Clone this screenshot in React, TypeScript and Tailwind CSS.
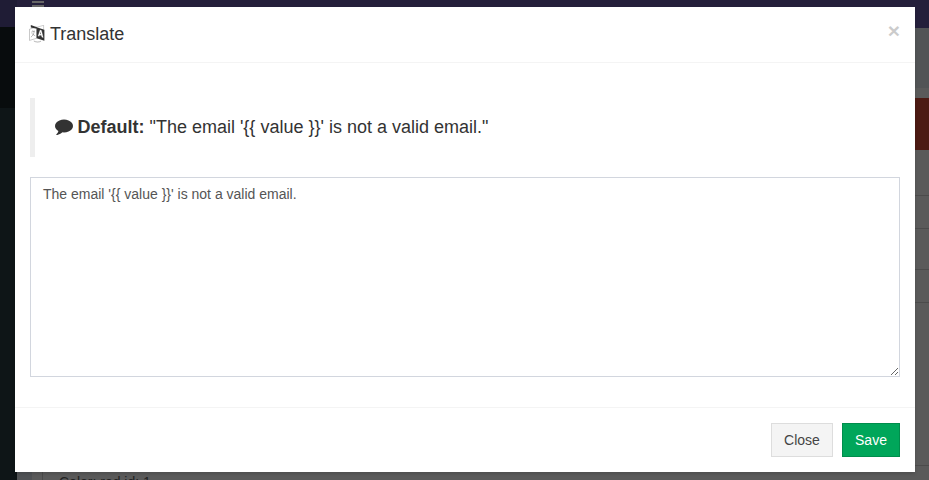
import React from "react";

function LanguageIcon() {
  return (
    <svg width="16" height="18" viewBox="0 0 16 18" className="-mt-[2px] shrink-0" aria-hidden="true">
      <path d="M.5 4.200 7.600 1.900v11.400L.5 15.400z" fill="#fff" stroke="#333" strokeOpacity=".45" strokeWidth=".6" />
      <path d="M1.800.1 8 2.200 7.800 3.800 1.800 2.400z" fill="#333" />
      <path d="M8 2.200 14.600.3v4" fill="none" stroke="#333" strokeOpacity=".4" strokeWidth=".6" />
      <path d="M7.600 2.200 15.400 4.700v11L7.600 13.300z" fill="#333" />
      <path d="m9.100 11 2-6 1.300.4 1.800 7.100-1.300-.4-.4-1.600-2-.6-.3 1.300zm1.700-2.100 1.300.4-.6-2.600z" fill="#fff" stroke="#fff" strokeWidth=".3" fillRule="evenodd" />
      <path d="M2.200 7.200 6 6M3.700 5.300l.5 1M5.300 6.500C4.800 9 3.400 11 1.900 12.200M2.800 8.200c.8 1.200 2 2.100 3.400 2.600" fill="none" stroke="#333" strokeOpacity=".5" strokeWidth=".7" />
      <path d="M4.800 16c2.300 1.300 5.100 1.400 7.300.1" fill="none" stroke="#333" strokeOpacity=".45" strokeWidth=".8" />
    </svg>
  );
}

function CommentIcon() {
  return (
    <svg width="18" height="18" viewBox="0 0 1792 1792" fill="currentColor" className="-mt-[3px] shrink-0" aria-hidden="true">
      <path d="M1792 896q0 174-120 321.500t-326 233-450 85.500q-70 0-145-8-198 175-460 242-49 14-114 22h-5q-15 0-27-10.500t-16-27.500v-1q-3-4-.5-12t2-10 4.500-9.500l6-9 7-8.500 8-9q7-8 31-34.500t34.500-38 31-39.500 32.500-51 27-59 26-76q-157-89-247.500-220t-90.500-281q0-174 120-321.500t326-233 450-85.500 450 85.500 326 233 120 321.500z" />
    </svg>
  );
}

function Backdrop() {
  return (
    <div className="flex h-[480px] w-full flex-col overflow-hidden bg-[#5a5a5a]">
      <div className="flex h-[27px] shrink-0 bg-[#241f3b]">
        <div className="w-[17px] bg-[#1f1c35]" />
        <div className="ml-[15px] flex w-3 flex-col gap-[2px] pt-[1px]">
          <div className="h-[2px] bg-[#666]" />
          <div className="h-[2px] bg-[#666]" />
        </div>
      </div>
      <div className="flex min-h-0 flex-1">
        <div className="flex w-[17px] flex-col bg-[#0e1517]">
          <div className="h-[81px] bg-[#080c0d]" />
        </div>
        <div className="w-[15px] bg-[#505255]" />
        <div className="flex flex-1 flex-col">
          <div className="h-[61px] shrink-0 border-t border-[#241f3b] bg-[#525456]" />
          <div className="h-[10px] shrink-0 bg-[#5a5a5a]" />
          <div className="h-[52px] shrink-0 bg-[#4c1a13]" />
          <div className="h-[46px] shrink-0 border-b border-[#4b4b4b]" />
          <div className="h-[33px] shrink-0 border-b border-[#4b4b4b]" />
          <div className="h-[41px] shrink-0 border-b border-[#4b4b4b]" />
          <div className="h-[33px] shrink-0 border-b border-[#4b4b4b]" />
          <div className="h-[163px] shrink-0 border-b border-[#4b4b4b]" />
          <div className="ml-[10px] h-[40px] shrink-0 border-l border-[#4a4a4a] pl-4 pt-[6px] text-[14px] leading-5 text-[#222]">Color: red id: 1</div>
        </div>
      </div>
    </div>
  );
}

export default function App() {
  return (
    <div className="relative h-[480px] w-[929px] overflow-hidden font-['Liberation_Sans',Arial,sans-serif]">
      <Backdrop />
      <div role="dialog" className="absolute left-[15px] top-[7px] flex h-[465px] w-[900px] flex-col bg-white text-[#333] shadow-[0_2px_3px_rgba(0,0,0,0.125)]">
        <header className="flex h-14 shrink-0 items-start justify-between border-b border-[#f4f4f4] pl-[14px] pr-[15px] pt-[14px]">
          <h4 className="flex items-center gap-[5px] pt-px text-[18px] leading-[25px]">
            <LanguageIcon />
            Translate
          </h4>
          <button aria-label="Close" className="-mt-px text-[21px] font-bold leading-[21px] text-black opacity-20">×</button>
        </header>
        <main className="flex flex-1 flex-col px-[15px] pt-[35px]">
          <blockquote className="mb-5 flex h-[59px] items-center border-l-[5px] border-[#eee] pl-[19.5px] text-[18px] leading-[25px]">
            <CommentIcon />
            <p className="ml-[5px]"><b>Default:</b> "The email '{"{{ value }}"}' is not a valid email."</p>
          </blockquote>
          <textarea className="h-[200px] w-full resize-y rounded-none border border-[#d2d6de] bg-white px-3 py-[6px] text-[14px] leading-5 text-[#555] outline-none" defaultValue="The email '{{ value }}' is not a valid email." />
        </main>
        <footer className="flex h-[65px] shrink-0 items-start justify-end gap-[9px] border-t border-[#f4f4f4] px-[15px] pt-[15px] text-[14px] leading-5">
          <button className="h-[34px] w-[62px] border border-[#ddd] bg-[#f4f4f4] text-[#444]">Close</button>
          <button className="h-[34px] w-[58px] border border-[#008d4c] bg-[#00a65a] text-white">Save</button>
        </footer>
      </div>
    </div>
  );
}
